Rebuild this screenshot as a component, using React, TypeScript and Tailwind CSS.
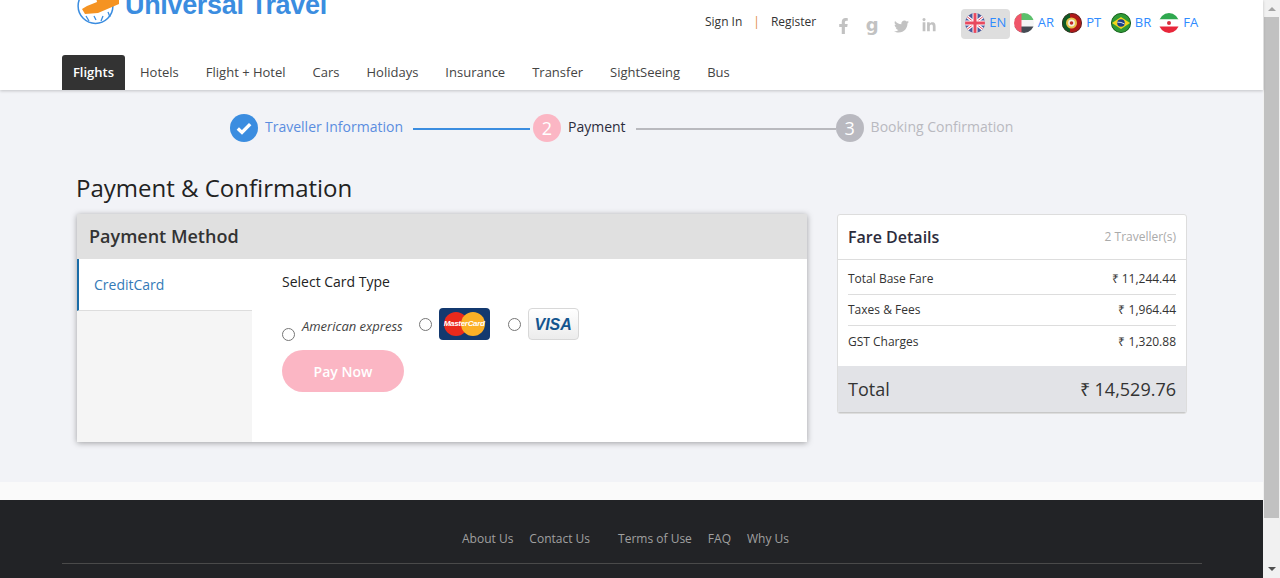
import { FaFacebookF, FaTwitter, FaLinkedinIn } from 'react-icons/fa';

const navItems = ['Hotels', 'Flight + Hotel', 'Cars', 'Holidays', 'Insurance', 'Transfer', 'SightSeeing', 'Bus'];

const fares = [
  { label: 'Total Base Fare', amount: '₹ 11,244.44' },
  { label: 'Taxes & Fees', amount: '₹ 1,964.44' },
  { label: 'GST Charges', amount: '₹ 1,320.88' },
];

function FlagUK() {
  return (
    <svg viewBox="0 0 20 20" className="w-5 h-5 shrink-0">
      <clipPath id="uk"><circle cx="10" cy="10" r="10" /></clipPath>
      <g clipPath="url(#uk)">
        <rect width="20" height="20" fill="#4a5a9c" />
        <path d="M0 2L20 18M20 2L0 18" stroke="#fff" strokeWidth="3" />
        <path d="M0 2L20 18M20 2L0 18" stroke="#e8495e" strokeWidth="1" />
        <path d="M10 0V20M0 10H20" stroke="#fff" strokeWidth="5" />
        <path d="M10 0V20M0 10H20" stroke="#e8495e" strokeWidth="3" />
      </g>
    </svg>
  );
}

function FlagAR() {
  return (
    <svg viewBox="0 0 20 20" className="w-5 h-5 shrink-0">
      <clipPath id="ar"><circle cx="10" cy="10" r="10" /></clipPath>
      <g clipPath="url(#ar)">
        <rect width="20" height="7" fill="#5cc06c" />
        <rect y="7" width="20" height="6.5" fill="#f5f5f5" />
        <rect y="13.5" width="20" height="6.5" fill="#454b54" />
        <rect width="7.5" height="20" fill="#f0566a" />
      </g>
    </svg>
  );
}

function FlagPT() {
  return (
    <svg viewBox="0 0 20 20" className="w-5 h-5 shrink-0">
      <clipPath id="pt"><circle cx="10" cy="10" r="10" /></clipPath>
      <g clipPath="url(#pt)">
        <rect width="20" height="20" fill="#b01818" />
        <rect width="8" height="20" fill="#0f5a22" />
        <circle cx="9.5" cy="10" r="5.5" fill="#e6c34a" />
        <circle cx="9.5" cy="10" r="3.4" fill="#f4f0e4" />
        <circle cx="9.5" cy="10" r="1.8" fill="#c22a2a" />
        <circle cx="10" cy="10" r="9.6" fill="none" stroke="#333" strokeWidth="0.8" />
      </g>
    </svg>
  );
}

function FlagBR() {
  return (
    <svg viewBox="0 0 20 20" className="w-5 h-5 shrink-0">
      <clipPath id="br"><circle cx="10" cy="10" r="10" /></clipPath>
      <g clipPath="url(#br)">
        <rect width="20" height="20" fill="#2f9a35" />
        <path d="M1 10L10 4L19 10L10 16Z" fill="#f4d41c" />
        <circle cx="10" cy="10" r="3.8" fill="#1d3f8a" />
        <path d="M6.4 9.2Q10 8.8 13.6 11" stroke="#fff" strokeWidth="0.8" fill="none" />
        <circle cx="10" cy="10" r="9.6" fill="none" stroke="#14431a" strokeWidth="0.8" />
      </g>
    </svg>
  );
}

function FlagFA() {
  return (
    <svg viewBox="0 0 20 20" className="w-5 h-5 shrink-0">
      <clipPath id="fa"><circle cx="10" cy="10" r="10" /></clipPath>
      <g clipPath="url(#fa)">
        <rect width="20" height="6.5" fill="#2fa84f" />
        <rect y="6.5" width="20" height="7" fill="#fff" />
        <rect y="13.5" width="20" height="6.5" fill="#e8263a" />
        <circle cx="10" cy="10" r="2" fill="#d8303f" />
      </g>
    </svg>
  );
}

const languages = [
  { code: 'EN', flag: <FlagUK />, active: true },
  { code: 'AR', flag: <FlagAR /> },
  { code: 'PT', flag: <FlagPT /> },
  { code: 'BR', flag: <FlagBR /> },
  { code: 'FA', flag: <FlagFA /> },
];

function LogoMark() {
  return (
    <svg viewBox="0 0 42 36" className="w-[42px] h-[36px] shrink-0">
      <circle cx="18.5" cy="17" r="17.4" fill="none" stroke="#3b8de0" strokeWidth="1.5" />
      <path d="M9 27L12 32M17 27L19 31M26 27L24 32M31 23L33 28" stroke="#3b8de0" strokeWidth="1.3" fill="none" />
      <path d="M5 20L8 25L21 24L42 15L42 6L30 9L26 2L18 4L20 13L10 17Z" fill="#f59322" />
    </svg>
  );
}

function MasterCard() {
  return (
    <div className="relative w-[51px] h-8 rounded-sm bg-[#13396f] flex items-center justify-center overflow-hidden">
      <span className="absolute left-[5px] top-[4px] w-6 h-6 rounded-full bg-[#ea2a1c]" />
      <span className="absolute right-[5px] top-[4px] w-6 h-6 rounded-full bg-[#fbb026]" />
      <span className="relative text-[8px] font-bold italic text-white font-['Liberation_Sans',sans-serif] tracking-[-0.3px]">MasterCard</span>
    </div>
  );
}

function VisaCard() {
  return (
    <div className="w-[51px] h-8 rounded-sm border border-[#d8d8d8] bg-gradient-to-b from-white to-[#ececec] flex items-center justify-center pt-[2px]">
      <span className="text-[16px] leading-none font-bold italic text-[#13558f] font-['Liberation_Sans',sans-serif]">VISA</span>
    </div>
  );
}

function Radio() {
  return <span className="block w-[13px] h-[13px] rounded-full border border-[#767676] bg-white shrink-0" />;
}

export default function App() {
  return (
    <div className="flex h-[578px] overflow-hidden bg-white font-['Open_Sans',sans-serif] text-[#222]">
      <div className="flex-1 min-w-0 flex flex-col">
        {/* Header */}
        <header className="h-[90px] bg-white shrink-0 shadow-[0_1px_3px_rgba(0,0,0,0.2)] relative z-10">
          <div className="h-[55px] flex overflow-hidden">
            <div className="ml-[77px] w-[270px] flex items-start gap-[6px] -mt-[11px]">
              <LogoMark />
              <span className="-mt-[2px] text-[27px] leading-[36px] font-bold text-[#3b8de0] whitespace-nowrap font-['Liberation_Sans',sans-serif] tracking-[-0.33px]">Universal Travel</span>
            </div>
            <div className="ml-[358px] pt-[14px] flex items-start text-[12px] leading-[16px] text-[#333]">
              <span>Sign In</span>
              <span className="ml-[11px] text-[#e08a4a]">|</span>
              <span className="ml-[11px]">Register</span>
            </div>
            <div className="ml-[21px] pt-[17px] flex items-start gap-[15px] text-[#c2c2c2]">
              <FaFacebookF className="w-[13px] h-[16px] mt-[1px]" />
              <span className="w-[14px] text-center text-[18px] leading-[16px] font-bold font-['DejaVu_Sans',sans-serif]">g</span>
              <FaTwitter className="w-[15px] h-[15px] mt-[2px]" />
              <FaLinkedinIn className="-ml-[2px] w-[14px] h-[15px] mt-[1px]" />
            </div>
            <div className="ml-[25px] pt-[9px] flex items-start">
              {languages.map((lang) => (
                <div
                  key={lang.code}
                  className={`w-[48.5px] h-[30px] pl-1 pb-[2px] flex items-center gap-[4px] text-[13px] text-[#2f8bff] rounded-sm ${lang.active ? 'bg-[#dedede]' : ''}`}
                >
                  {lang.flag}
                  <span>{lang.code}</span>
                </div>
              ))}
            </div>
          </div>
          <nav className="h-[35px] pl-[62px] flex items-stretch text-[13px] text-[#444]">
            <div className="w-[63px] bg-[#333] text-white rounded-t-[3px] flex items-center justify-center mr-[1.5px] font-semibold">Flights</div>
            {navItems.map((item) => (
              <div key={item} className="px-[13.5px] flex items-center">{item}</div>
            ))}
          </nav>
        </header>

        {/* Main */}
        <main className="h-[392px] shrink-0 bg-[#f2f3f7] px-[76px]">
          {/* Stepper */}
          <div className="pt-[24px] pl-[154px] h-[80px] flex items-start text-[14px]">
            <span className="w-7 h-7 rounded-full bg-[#3b8de0] flex items-center justify-center">
              <svg viewBox="0 0 16 16" className="w-[18px] h-[18px]"><path d="M2.5 8.5L6.2 12L13.5 4.5" fill="none" stroke="#fff" strokeWidth="3" /></svg>
            </span>
            <span className="ml-[7px] leading-[26px] text-[#5b8de0]">Traveller Information</span>
            <span className="ml-[10px] mt-[14px] w-[117px] h-[2px] bg-[#3b8de0]" />
            <span className="ml-[3px] w-7 h-7 rounded-full bg-[#fbb6c4] text-white text-[18px] flex items-center justify-center">2</span>
            <span className="ml-[7px] leading-[26px] text-[#2c2c3c]">Payment</span>
            <span className="ml-[10px] mt-[14px] w-[200px] h-[2px] bg-[#b9b9be]" />
            <span className="w-7 h-7 rounded-full bg-[#b9b9c0] text-white text-[18px] flex items-center justify-center">3</span>
            <span className="ml-[7px] leading-[26px] text-[#b9b9c0]">Booking Confirmation</span>
          </div>

          <h1 className="text-[24px] leading-[36px] h-[44px] text-[#222]">Payment &amp; Confirmation</h1>

          <div className="flex items-start">
            {/* Payment card */}
            <section className="ml-px w-[730px] h-[228px] bg-white shadow-[0_1px_6px_rgba(0,0,0,0.35)] flex flex-col">
              <div className="h-[45px] bg-[#e0e0e0] px-3 flex items-center text-[18px] font-semibold text-[#333]">Payment Method</div>
              <div className="flex-1 flex">
                <div className="w-[175px] bg-[#f5f5f5]">
                  <div className="h-[52px] bg-white border-l-2 border-b border-l-[#1a6ca8] border-b-[#ddd] pl-[15px] flex items-center text-[14px] text-[#337ab7]">CreditCard</div>
                </div>
                <div className="pl-[30px] pt-[13px]">
                  <p className="text-[14px] leading-[19px] text-[#222]">Select Card Type</p>
                  <div className="mt-[17px] h-[33px] flex items-start">
                    <span className="mt-[20px]"><Radio /></span>
                    <span className="ml-[7px] mt-[10px] text-[13px] leading-[16px] italic text-[#444]">American express</span>
                    <span className="ml-[16px] mt-[10px]"><Radio /></span>
                    <span className="ml-[7px]"><MasterCard /></span>
                    <span className="ml-[18px] mt-[10px]"><Radio /></span>
                    <span className="ml-[7px]"><VisaCard /></span>
                  </div>
                  <button className="mt-[9px] w-[122px] h-[42px] rounded-full bg-[#fbb6c4] text-white text-[14px] font-semibold">Pay Now</button>
                </div>
              </div>
            </section>

            {/* Fare card */}
            <aside className="ml-[30px] w-[350px] h-[200px] bg-white border border-[#ddd] rounded-[3px] overflow-hidden flex flex-col">
              <div className="h-[45px] px-[10px] border-b border-[#ddd] flex items-center justify-between">
                <span className="text-[16px] font-semibold text-[#2c2c3c]">Fare Details</span>
                <span className="text-[12px] text-[#aaa]">2 Traveller(s)</span>
              </div>
              <div className="flex-1 px-[10px] pt-[4px] text-[12px] text-[#333]">
                {fares.map((fare, i) => (
                  <div key={fare.label} className={`h-[31px] flex items-center justify-between ${i < 2 ? 'border-b border-[#ddd]' : ''}`}>
                    <span>{fare.label}</span>
                    <span>{fare.amount}</span>
                  </div>
                ))}
              </div>
              <div className="h-[47px] bg-[#e2e3e7] border-b border-[#c8c8c8] px-[10px] flex items-center justify-between text-[18px] text-[#333]">
                <span>Total</span>
                <span>₹ 14,529.76</span>
              </div>
            </aside>
          </div>
        </main>

        <div className="h-[18px] shrink-0 bg-[#fafafa]" />

        {/* Footer */}
        <footer className="flex-1 bg-[#222326] pl-[62px] pr-[61px]">
          <div className="h-[64px] border-b border-[#4a4a4a] pt-[30px] flex justify-center text-[12px] leading-[18px] text-[#a0a0a0] pr-[13px]">
            <span>About Us</span>
            <span className="ml-[16px]">Contact Us</span>
            <span className="ml-[28px]">Terms of Use</span>
            <span className="ml-[16px]">FAQ</span>
            <span className="ml-[16px]">Why Us</span>
          </div>
        </footer>
      </div>

      {/* Scrollbar */}
      <div className="w-[17px] shrink-0 bg-[#f1f1f1] flex flex-col items-center">
        <div className="h-[17px] flex items-center justify-center">
          <span className="w-0 h-0 border-x-[4px] border-x-transparent border-b-[4px] border-b-[#a3a3a3]" />
        </div>
        <div className="w-[15px] h-[501px] bg-[#c1c1c1]" />
        <div className="flex-1 flex items-end pb-[7px]">
          <span className="w-0 h-0 border-x-[4px] border-x-transparent border-t-[4px] border-t-[#505050]" />
        </div>
      </div>
    </div>
  );
}
